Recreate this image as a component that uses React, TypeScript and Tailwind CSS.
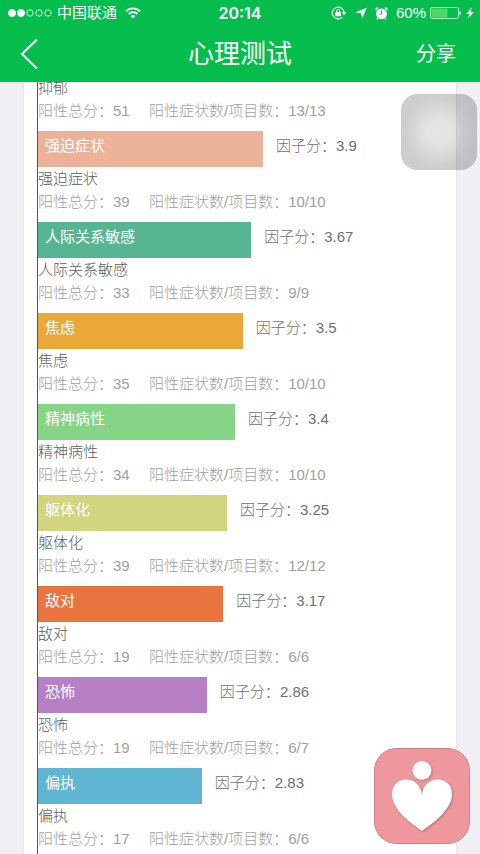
import React from 'react';

type Factor = {
  name: string;
  score?: string;
  total: number;
  items: string;
  width?: number;
  color?: string;
};

const factors: Factor[] = [
  { name: '抑郁', total: 51, items: '13/13' },
  { name: '强迫症状', score: '3.9', total: 39, items: '10/10', width: 53.8, color: 'bg-[#ecb299]' },
  { name: '人际关系敏感', score: '3.67', total: 33, items: '9/9', width: 51, color: 'bg-[#58b592]' },
  { name: '焦虑', score: '3.5', total: 35, items: '10/10', width: 49, color: 'bg-[#e9a837]' },
  { name: '精神病性', score: '3.4', total: 34, items: '10/10', width: 47.1, color: 'bg-[#86d586]' },
  { name: '躯体化', score: '3.25', total: 39, items: '12/12', width: 45.2, color: 'bg-[#d2d47f]' },
  { name: '敌对', score: '3.17', total: 19, items: '6/6', width: 44.3, color: 'bg-[#ea7440]' },
  { name: '恐怖', score: '2.86', total: 19, items: '6/7', width: 40.4, color: 'bg-[#b67fc6]' },
  { name: '偏执', score: '2.83', total: 17, items: '6/6', width: 39.2, color: 'bg-[#60b5d2]' }
];

function StatusBar() {
  return (
    <div className="grid h-[26px] grid-cols-[1fr_auto_1fr] items-center px-1.5 text-[15px] leading-5">
      <div className="flex items-center pl-0.5">
        <svg width="44" height="10" viewBox="0 0 44 10" fill="none" stroke="currentColor" aria-hidden="true">
          <circle cx="4" cy="5" r="3.5" fill="currentColor" />
          <circle cx="13" cy="5" r="3.5" fill="currentColor" />
          <circle cx="22" cy="5" r="3.2" strokeWidth="0.8" />
          <circle cx="31" cy="5" r="3.2" strokeWidth="0.8" />
          <circle cx="40" cy="5" r="3.2" strokeWidth="0.8" />
        </svg>
        <span className="ml-[5px]">中国联通</span>
        <svg className="ml-2" width="16" height="12" viewBox="0 0 16 12" fill="none" stroke="currentColor" aria-hidden="true">
          <path d="M1 4.2a10 10 0 0 1 14 0" strokeWidth="1.9" />
          <path d="M3.6 7a6.2 6.2 0 0 1 8.8 0" strokeWidth="1.8" />
          <path d="M8 11.6 5.6 9.2a3.4 3.4 0 0 1 4.8 0z" fill="currentColor" stroke="none" />
        </svg>
      </div>
      <time className="font-['Inter',sans-serif] text-base leading-5 font-semibold">20:14</time>
      <div className="flex items-center justify-end">
        <svg width="16" height="14" viewBox="0 0 16 14" fill="none" stroke="currentColor" aria-hidden="true">
          <path d="M13 6.2A5.9 5.9 0 1 0 11.2 11.3" strokeWidth="1.1" />
          <path d="M10.7 6.2h4.8l-2.4 3z" fill="currentColor" stroke="none" />
          <rect x="4.4" y="6" width="5.6" height="4.2" rx="0.4" fill="currentColor" stroke="none" />
          <path d="M5.7 6.2V4.9a1.5 1.5 0 0 1 3 0v1.3" strokeWidth="1" />
        </svg>
        <svg className="ml-2" width="12" height="12" viewBox="0 0 12 12" fill="currentColor" aria-hidden="true">
          <path d="M11.8.4 7.2 11.6 6.2 6.2.3 5.6z" />
        </svg>
        <svg className="ml-2" width="13" height="13" viewBox="0 0 13 13" fill="none" stroke="currentColor" aria-hidden="true">
          <circle cx="6.5" cy="6.8" r="5.4" fill="currentColor" stroke="none" />
          <path d="M.7 3.2A3 3 0 0 1 3.2.9M12.3 3.2A3 3 0 0 0 9.8.9M3 11l-1 1.3M10 11l1 1.3" strokeWidth="1.6" />
          <path d="M6.5 3.6v3.5H4.2" stroke="#05bd4c" strokeWidth="0.9" />
        </svg>
        <span className="ml-2">60%</span>
        <svg className="ml-1" width="32" height="12" viewBox="0 0 32 12" fill="none" aria-hidden="true">
          <rect x="0.5" y="0.5" width="28" height="11" rx="1.5" stroke="#b5efc6" />
          <rect x="1.5" y="1.5" width="16" height="9" fill="#4cd964" />
          <path d="M29.5 4c2 .3 2 3.7 0 4z" fill="currentColor" />
        </svg>
        <svg className="ml-1" width="8" height="12" viewBox="0 0 8 12" fill="currentColor" aria-hidden="true">
          <path d="M5.8.2.2 6.9h3L1.9 11.8 7.8 4.9H4.7z" />
        </svg>
      </div>
    </div>
  );
}

function FactorRow({ factor }: { factor: Factor }) {
  return (
    <li className="pb-[9px]">
      {factor.score &&
      <div className="flex items-center leading-[30px]">
        <div className={`h-9 pl-[7px] font-normal text-white ${factor.color}`} style={{ width: `${factor.width}%` }}>
          {factor.name}
        </div>
        <p className="ml-[13px] h-9 text-[#707070]">因子分：{factor.score}</p>
      </div>
      }
      <h2 className="leading-[23px] text-[#5c5c5c]">{factor.name}</h2>
      <p className="flex leading-[23px] text-[#a0a0a0]">
        <span className="w-[111px]">阳性总分：{factor.total}</span>
        <span>阳性症状数/项目数：{factor.items}</span>
      </p>
    </li>
  );
}

export default function App() {
  return (
    <div className="flex h-screen flex-col overflow-hidden bg-[#efeff4] font-['Liberation_Sans','Noto_Sans_CJK_SC',sans-serif] text-[15px] font-light">
      <header className="relative z-10 shrink-0 bg-[#05bd4c] font-normal text-white">
        <StatusBar />
        <nav className="grid h-14 grid-cols-[1fr_auto_1fr] items-center px-5">
          <button type="button" aria-label="返回" className="justify-self-start">
            <svg width="18" height="32" viewBox="0 0 18 32" fill="none" stroke="currentColor" strokeWidth="2">
              <path d="M17 1.5 2 16l15 14.5" />
            </svg>
          </button>
          <h1 className="text-[26px] leading-8">心理测试</h1>
          <button type="button" className="mr-1 justify-self-end text-xl leading-7">分享</button>
        </nav>
      </header>

      <main className="mx-6 -mt-1.5 flex-1 bg-white pl-[13px] shadow-sm">
        <ul className="border-l border-[#555]">
          {factors.map((factor) =>
          <FactorRow key={factor.name} factor={factor} />
          )}
        </ul>
      </main>

      {/* Floating buttons */}
      <button
        type="button"
        aria-label="辅助触控"
        className="fixed top-[94px] right-[3px] z-20 size-[76px] rounded-2xl bg-[radial-gradient(circle_closest-side,#e3e3e3_0,#e0e0e0_35%,#cbcbcb_85%,#c8c8c8_100%)] opacity-90 mix-blend-multiply" />
      <button type="button" aria-label="心理健康" className="fixed right-2.5 bottom-2.5 z-20">
        <svg width="96" height="96" viewBox="0 0 96 96">
          <rect x="0.5" y="0.5" width="95" height="95" rx="22" fill="#ee989d" stroke="#c9858b" />
          <g className="drop-shadow-[1px_1px_1px_#b96e75]" fill="#fff">
            <circle cx="48" cy="22.5" r="9.5" />
            <path d="M48 83C38 76 18 62 18 46c0-9 6-14.5 14-14.5 9 0 15 6 16 15.5 1-9.5 7-15.5 16-15.5 8 0 14 5.5 14 14.5 0 16-20 30-30 37z" />
          </g>
        </svg>
      </button>
    </div>
  );
}
